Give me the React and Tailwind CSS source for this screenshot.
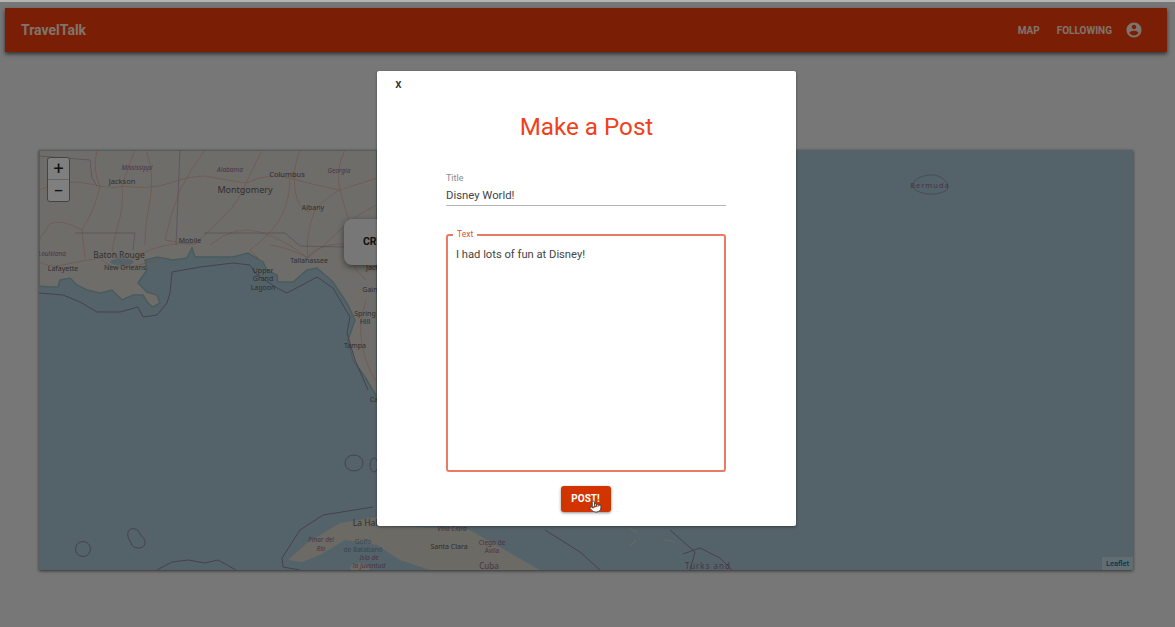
import React from 'react';
import { Pointer } from 'lucide-react';

const roboto = { fontFamily: 'Roboto, "Liberation Sans", sans-serif' };

const ROADS = [
  'M39 190 Q65 178 90 184 T122 186 Q150 190 170 183 T205 176 Q225 180 246 183 Q270 172 290 178 T340 190 L377 178',
  'M97 150 Q92 170 100 186 Q95 210 82 230 Q60 218 50 224 L39 240',
  'M135 150 Q128 168 122 186 Q124 205 118 225 L112 250 L125 268',
  'M205 150 Q190 170 180 190 Q170 215 165 240 L190 244',
  'M246 183 Q240 200 225 215 T195 244 Q170 242 150 250 T125 268',
  'M246 183 L262 150',
  'M290 178 Q290 198 282 215 T250 250 L262 262',
  'M340 190 Q325 198 315 210 Q305 235 308 258 Q290 248 270 245',
  'M308 258 Q285 240 260 232 T210 245',
  'M377 205 Q355 215 340 230 T308 258',
  'M377 255 Q350 240 330 245 T308 258',
  'M366 280 Q356 272 352 262 T377 240',
  'M366 300 Q358 325 362 345 T375 380',
  'M39 262 Q50 268 63 265 T100 258 Q112 270 125 268 T163 258',
  'M82 230 L85 258',
  'M146 150 Q155 175 150 200 T145 245',
  'M300 150 Q292 170 295 190 T310 212',
  'M345 150 Q335 170 340 190 T352 230',
  'M330 545 L355 530 L377 520',
  'M430 540 L470 548 L530 566',
];

const LABELS = [
  { x: 122, y: 184, size: 7.5, text: 'Jackson' },
  { x: 137, y: 170, size: 6.5, text: 'Mississippi', tint: true, italic: true },
  { x: 230, y: 172, size: 6.5, text: 'Alabama', tint: true, italic: true },
  { x: 245, y: 193, size: 9, text: 'Montgomery' },
  { x: 287, y: 177, size: 7.5, text: 'Columbus' },
  { x: 339, y: 173, size: 6.5, text: 'Georgia', tint: true, italic: true },
  { x: 313, y: 210, size: 7, text: 'Albany' },
  { x: 190, y: 243, size: 7, text: 'Mobile' },
  { x: 119, y: 258, size: 8.5, text: 'Baton Rouge' },
  { x: 52, y: 256, size: 6.5, text: 'Louisiana', tint: true, italic: true },
  { x: 63, y: 271, size: 7, text: 'Lafayette' },
  { x: 125, y: 270, size: 7, text: 'New Orleans' },
  { x: 263, y: 273, size: 7, text: 'Upper' },
  { x: 263, y: 281, size: 7, text: 'Grand' },
  { x: 263, y: 290, size: 7, text: 'Lagoon' },
  { x: 309, y: 263, size: 7, text: 'Tallahassee' },
  { x: 385, y: 270, size: 7, text: 'Jacksonville' },
  { x: 380, y: 292, size: 7, text: 'Gainesville' },
  { x: 365, y: 316, size: 7, text: 'Spring' },
  { x: 365, y: 324, size: 7, text: 'Hill' },
  { x: 355, y: 348, size: 7, text: 'Tampa' },
  { x: 378, y: 402, size: 7, text: 'Cape' },
  { x: 374, y: 526, size: 8.5, text: 'La Habana' },
  { x: 321, y: 542, size: 6.5, text: 'Pinar del', tint: true, italic: true },
  { x: 321, y: 551, size: 6.5, text: 'Río', tint: true, italic: true },
  { x: 363, y: 544, size: 6.5, text: 'Golfo', water: true },
  { x: 363, y: 552, size: 6.5, text: 'de Batabanó', water: true },
  { x: 369, y: 560, size: 6.5, text: 'Isla de', tint: true, italic: true },
  { x: 369, y: 568, size: 6.5, text: 'la Juventud', tint: true, italic: true },
  { x: 452, y: 531, size: 6.5, text: 'Villa Clara', tint: true, italic: true },
  { x: 449, y: 549, size: 7, text: 'Santa Clara' },
  { x: 492, y: 545, size: 6.5, text: 'Ciego de', tint: true },
  { x: 492, y: 553, size: 6.5, text: 'Ávila', tint: true },
  { x: 489, y: 569, size: 8, text: 'Cuba', tint: true },
  { x: 708, y: 569, size: 8, text: 'Turks and', tint: true, spaced: true },
  { x: 930, y: 188, size: 7.5, text: 'Bermuda', tint: true, spaced: true },
];

function MapDrawing() {
  return (
    <svg viewBox="39 150 1094 420" className="block w-full h-full">
      <rect x="39" y="150" width="1094" height="420" fill="#a8c6d2" />
      {/* gulf coast and florida, land sits above this line */}
      <path
        fill="#dfdbd4"
        stroke="#93b6b8"
        strokeWidth="1.5"
        d="M39 150 L39 286 L50 287 L58 287 L60 280 L70 278 L77 285 L87 290 L100 293 L112 290 L122 300 L133 295 L143 295 L148 303 L153 307 L160 303 L157 295 L147 292 L138 283 L147 270 L145 260 L157 257 L173 260 L187 258 L192 248 L195 257 L217 257 L233 257 L248 253 L263 262 L267 270 L277 275 L278 282 L293 282 L307 270 L317 268 L333 282 L347 303 L355 320 L348 340 L353 360 L365 377 L377 397 L377 150 Z"
      />
      <ellipse cx="122" cy="262" rx="12" ry="3.5" fill="#a8c6d2" />
      <path
        fill="none"
        stroke="#8f7f9e"
        strokeWidth="1"
        d="M39 293 L63 295 L80 302 L97 312 L120 312 L138 307 L143 317 L157 315 L167 303 L170 293 L172 272 L200 267 L233 263 L250 265 L257 275 L277 288 L287 293 L317 277 L333 288 L350 317 L347 333 L355 360 L368 390"
      />
      {ROADS.map((d) => (
        <path key={d} d={d} fill="none" stroke="#e2a797" strokeWidth="0.7" />
      ))}
      <path d="M39 156 L90 160 L92 178 L97 186" fill="none" stroke="#a99ab0" strokeWidth="0.7" />
      <path d="M75 233 L135 233 L133 250" fill="none" stroke="#a99ab0" strokeWidth="0.7" />
      <path d="M204 233 L285 233 L300 246 L345 247" fill="none" stroke="#a99ab0" strokeWidth="0.7" />
      <path d="M180 150 L176 245" fill="none" stroke="#a99ab0" strokeWidth="0.7" />

      {/* cuba and the islands under the modal */}
      <path
        fill="#d6d5c8"
        d="M288 560 L307 543 L340 523 L377 517 L395 526 L470 530 L540 570 L430 570 L400 560 L377 545 L345 540 L320 555 L302 562 Z"
      />
      <ellipse cx="360" cy="568" rx="10" ry="5" fill="#d6d5c8" />
      <path
        fill="none"
        stroke="#8f7f9e"
        strokeWidth="1"
        d="M300 570 L283 567 L282 558 L300 530 L323 515 L373 507 M157 570 L172 562 L188 560 L205 563 L218 560 L236 570 M545 530 L580 552 L600 570 M670 530 L695 552 L690 570 M683 554 L700 548 L720 558 L732 570"
      />
      <ellipse cx="354" cy="463" rx="9" ry="8" fill="none" stroke="#8f7f9e" strokeWidth="1" />
      <ellipse cx="374" cy="465" rx="4" ry="7" fill="none" stroke="#8f7f9e" strokeWidth="1" />
      <circle cx="83" cy="549" r="7.5" fill="none" stroke="#8f7f9e" strokeWidth="1" />
      <path
        d="M128 537 C126 528 135 526 139 532 C141 537 146 538 145 544 C143 550 132 549 131 543 Z"
        fill="none"
        stroke="#8f7f9e"
        strokeWidth="1"
      />
      <path
        d="M912 186 C914 178 925 174 935 175 C945 178 950 184 947 190 C938 196 918 196 912 186 Z"
        fill="none"
        stroke="#8f7f9e"
        strokeWidth="0.7"
      />
      <path d="M628 527 L637 533 M636 540 L630 546 M665 540 L675 542" stroke="#c8d2c8" strokeWidth="1.2" fill="none" />

      {LABELS.map((l) => (
        <text
          key={l.text}
          x={l.x}
          y={l.y}
          textAnchor="middle"
          fontSize={l.size}
          letterSpacing={l.spaced ? 1 : 0}
          fontStyle={l.italic ? 'italic' : 'normal'}
          fill={l.tint ? '#96688f' : l.water ? '#6f8ca0' : '#606060'}
          fontFamily="'Noto Sans', sans-serif"
        >
          {l.text}
        </text>
      ))}
    </svg>
  );
}

function NavBar() {
  return (
    <header
      className="mt-[6px] ml-[5px] mr-[8px] h-[44px] flex items-center pl-[16px] pr-[24px] bg-[#f43e0a] shadow-[0_2px_4px_rgba(0,0,0,0.6)]"
      style={roboto}
    >
      <span className="text-[14px] font-bold text-[#ffe6da]">TravelTalk</span>
      <nav className="ml-auto flex items-center text-[10px] font-bold text-[#ffe6da]">
        <span>MAP</span>
        <span className="ml-[17px]">FOLLOWING</span>
        <svg viewBox="0 0 24 24" className="ml-[13px] w-[18px] h-[18px] fill-[#ffe6da]">
          <path d="M12 2C6.48 2 2 6.48 2 12s4.48 10 10 10 10-4.48 10-10S17.52 2 12 2zm0 3c1.66 0 3 1.34 3 3s-1.34 3-3 3-3-1.34-3-3 1.34-3 3-3zm0 14.2c-2.5 0-4.71-1.28-6-3.22.03-1.99 4-3.08 6-3.08 1.99 0 5.97 1.09 6 3.08-1.29 1.94-3.5 3.22-6 3.22z" />
        </svg>
      </nav>
    </header>
  );
}

function MapPanel() {
  return (
    <section className="relative mt-[98px] ml-[39px] mr-[42px] h-[420px] overflow-hidden shadow-[0_1px_3px_rgba(0,0,0,0.6)]">
      <MapDrawing />
      {/* leaflet zoom control */}
      <div
        className="absolute left-[8px] top-[7px] w-[23px] h-[45px] flex flex-col rounded-[3px] border border-[#888] bg-white text-[#222]"
        style={roboto}
      >
        <span className="flex-1 flex items-center justify-center text-[18px] leading-none border-b border-[#ccc]">+</span>
        <span className="flex-1 flex items-center justify-center text-[18px] leading-none">−</span>
      </div>
      <div className="absolute left-[305px] top-[69px] w-[100px] h-[46px] flex items-center pl-[19px] rounded-[8px] bg-[#eeeeee] shadow-[0_2px_6px_rgba(0,0,0,0.5)] text-[10.5px] font-bold text-[#222]" style={roboto}>
        CREATE
      </div>
      <span className="absolute right-0 bottom-0 px-[4px] py-[1px] bg-[#c4dbe4] text-[7.5px] font-medium text-[#0078a8]" style={roboto}>
        Leaflet
      </span>
    </section>
  );
}

function PostModal() {
  return (
    <div
      className="absolute left-[377px] top-[71px] w-[419px] h-[455px] flex flex-col bg-white rounded-[2px] shadow-[0_1px_3px_rgba(0,0,0,0.4)]"
      style={roboto}
    >
      <button className="self-start ml-[18px] mt-[6px] w-[7px] text-[12.5px] leading-[14px] font-medium text-[#333]">x</button>
      <h1 className="mt-[20px] text-center text-[24.2px] leading-[32px] text-[#f0411a]">Make a Post</h1>

      <div className="mt-[29px] ml-[69px] mr-[70px]">
        <label className="block text-[9px] leading-[12px] text-[#8a8a8a]">Title</label>
        <div className="mt-[2px] h-[20px] border-b border-[#b5b5b5] text-[11.3px] leading-[20px] text-[#444]">Disney World!</div>
      </div>

      <fieldset className="mt-[23px] ml-[69px] mr-[70px] h-[243px] px-[8px] border-2 border-[#ea7a63] rounded-[3px]">
        <legend className="-ml-[3px] px-[4px] text-[8.5px] leading-[11px] text-[#d9533a]">Text</legend>
        <p className="mt-[6px] text-[11.2px] leading-[17px] text-[#444]">I had lots of fun at Disney!</p>
      </fieldset>

      <div className="relative self-center mr-[2px] mt-[13px]">
        <button className="w-[50px] h-[26px] rounded-[3px] bg-[#d23400] text-white text-[10px] font-bold shadow-[0_1px_3px_rgba(0,0,0,0.45)]">
          POST!
        </button>
        <Pointer size={13} strokeWidth={1.5} className="absolute left-[28px] top-[15px] fill-white text-[#333]" />
      </div>
    </div>
  );
}

export default function App() {
  return (
    <div className="relative h-screen overflow-hidden bg-[#eeeeee]">
      <div className="h-[2px] bg-[#b4b4b4]" />
      <NavBar />
      <MapPanel />
      <div className="absolute inset-x-0 top-[2px] bottom-0 bg-black/50" />
      <PostModal />
    </div>
  );
}
